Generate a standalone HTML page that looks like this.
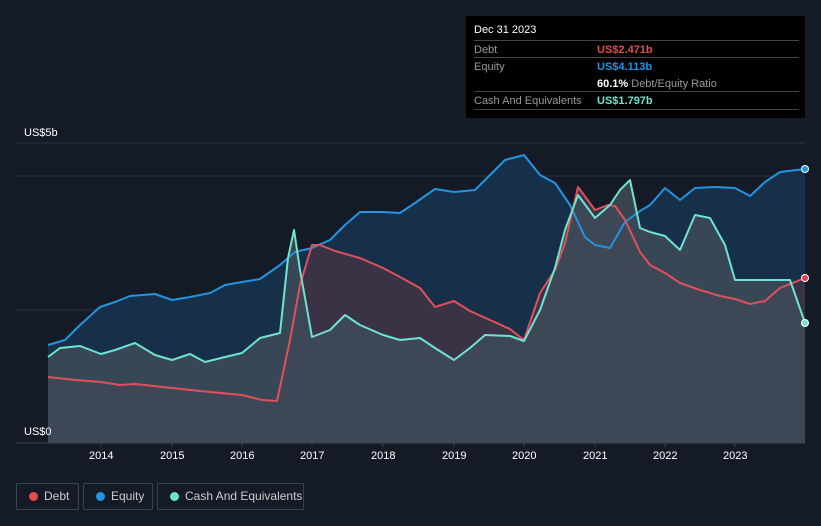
<!DOCTYPE html>
<html><head><meta charset="utf-8"><style>
body{margin:0;background:#151b26;width:821px;height:526px;overflow:hidden;font-family:"Liberation Sans",sans-serif;position:relative}
.tt{position:absolute;left:466px;top:16px;width:339px;height:102px;background:#000}
.tt .h{position:absolute;left:8px;top:8px;color:#fff;font-size:11px}
.row{position:absolute;left:8px;width:325px;border-top:1px solid #444;height:16px;font-size:11px;color:#999;line-height:16px;padding-top:1px}
.row span{position:absolute;left:123px;top:1px;font-weight:bold}
.leg{position:absolute;top:483px;height:27px;border:1px solid #3a4150;border-radius:2px;color:#ccc;font-size:12px;line-height:25px;box-sizing:border-box}
.leg i{position:absolute;left:12px;top:8px;width:9px;height:9px;border-radius:50%}
.leg b{font-weight:normal;position:absolute;left:27px}
.yr{position:absolute;top:450px;color:#fff;font-size:11px}
</style></head><body>
<svg width="821" height="526" style="position:absolute;left:0;top:0">
<line x1="16" y1="143" x2="805" y2="143" stroke="#2a3140"/>
<line x1="16" y1="176" x2="805" y2="176" stroke="#2a3140"/>
<line x1="16" y1="310" x2="805" y2="310" stroke="#2a3140"/>
<line x1="16" y1="443" x2="805" y2="443" stroke="#3a4150"/>
<g stroke-linejoin="round" stroke-width="2">
<polygon fill="#16304a" points="48,345 65,340 80,325 100,307 115,302 130,296 155,294 172,300 190,297 210,293 225,285 242,282 260,279 280,265 295,252 312,248 330,240 345,225 360,212 383,212 400,213 415,203 435,189 454,192 475,190 490,175 505,160 524,155 540,175 555,183 570,205 585,237 595,245 610,248 625,222 640,211 650,205 665,188 680,200 695,188 715,187 735,188 750,196 765,182 780,172 805,169 805,443 48,443"/>
<polygon fill="#3a3346" points="48,377 75,380 101,382 120,385 135,384 172,388 200,391 242,395 262,400 277,401 290,340 300,285 312,245 320,245 335,251 360,258 383,268 400,277 420,288 435,307 454,301 470,311 490,320 510,329 524,340 540,293 555,270 565,243 578,187 595,210 608,205 615,206 625,220 640,252 650,265 665,273 680,283 700,290 720,296 735,299 750,304 765,301 780,288 805,278 805,443 48,443"/>
<polygon fill="#3e4b58" opacity="0.85" points="48,357 60,348 80,346 101,354 115,350 135,343 155,355 172,360 190,354 205,362 225,357 242,353 260,338 280,333 288,258 294,230 300,270 312,337 330,330 345,315 360,325 383,335 400,340 420,338 435,348 454,360 470,348 485,335 510,336 524,341 540,310 555,268 565,230 578,195 595,218 610,205 620,190 630,180 640,228 650,232 665,236 680,250 695,215 710,218 725,245 735,280 765,280 790,280 805,323 805,443 48,443"/>
<polyline fill="none" stroke="#2394df" points="48,345 65,340 80,325 100,307 115,302 130,296 155,294 172,300 190,297 210,293 225,285 242,282 260,279 280,265 295,252 312,248 330,240 345,225 360,212 383,212 400,213 415,203 435,189 454,192 475,190 490,175 505,160 524,155 540,175 555,183 570,205 585,237 595,245 610,248 625,222 640,211 650,205 665,188 680,200 695,188 715,187 735,188 750,196 765,182 780,172 805,169"/>
<polyline fill="none" stroke="#e0505a" points="48,377 75,380 101,382 120,385 135,384 172,388 200,391 242,395 262,400 277,401 290,340 300,285 312,245 320,245 335,251 360,258 383,268 400,277 420,288 435,307 454,301 470,311 490,320 510,329 524,340 540,293 555,270 565,243 578,187 595,210 608,205 615,206 625,220 640,252 650,265 665,273 680,283 700,290 720,296 735,299 750,304 765,301 780,288 805,278"/>
<polyline fill="none" stroke="#6ee3cf" points="48,357 60,348 80,346 101,354 115,350 135,343 155,355 172,360 190,354 205,362 225,357 242,353 260,338 280,333 288,258 294,230 300,270 312,337 330,330 345,315 360,325 383,335 400,340 420,338 435,348 454,360 470,348 485,335 510,336 524,341 540,310 555,268 565,230 578,195 595,218 610,205 620,190 630,180 640,228 650,232 665,236 680,250 695,215 710,218 725,245 735,280 765,280 790,280 805,323"/>
</g>
<circle cx="805" cy="169" r="3.5" fill="#2394df" stroke="#fff" stroke-width="1"/>
<circle cx="805" cy="278" r="3.5" fill="#e0404a" stroke="#fff" stroke-width="1"/>
<circle cx="805" cy="323" r="3.5" fill="#6ee3cf" stroke="#fff" stroke-width="1"/>
<g stroke="#3a4150"><line x1="101" y1="443" x2="101" y2="447"/><line x1="172" y1="443" x2="172" y2="447"/><line x1="242" y1="443" x2="242" y2="447"/><line x1="312" y1="443" x2="312" y2="447"/><line x1="383" y1="443" x2="383" y2="447"/><line x1="454" y1="443" x2="454" y2="447"/><line x1="524" y1="443" x2="524" y2="447"/><line x1="595" y1="443" x2="595" y2="447"/><line x1="665" y1="443" x2="665" y2="447"/><line x1="735" y1="443" x2="735" y2="447"/></g>
<text x="24" y="136" fill="#fff" font-size="11" font-family="Liberation Sans">US$5b</text>
<text x="24" y="435" fill="#fff" font-size="11" font-family="Liberation Sans">US$0</text>
</svg>
<div class="yr" style="left:89px">2014</div><div class="yr" style="left:160px">2015</div><div class="yr" style="left:230px">2016</div><div class="yr" style="left:300px">2017</div><div class="yr" style="left:371px">2018</div><div class="yr" style="left:442px">2019</div><div class="yr" style="left:512px">2020</div><div class="yr" style="left:583px">2021</div><div class="yr" style="left:653px">2022</div><div class="yr" style="left:723px">2023</div>
<div class="tt"><div class="h">Dec 31 2023</div>
<div class="row" style="top:24px">Debt<span style="color:#e84a52">US$2.471b</span></div>
<div class="row" style="top:41px">Equity<span style="color:#2394df">US$4.113b</span></div>
<div class="row" style="top:58px;border-color:transparent"><span style="color:#fff">60.1% <em style="font-style:normal;font-weight:normal;color:#999">Debt/Equity Ratio</em></span></div>
<div class="row" style="top:75px">Cash And Equivalents<span style="color:#6ee3cf">US$1.797b</span></div>
<div class="row" style="top:93px"></div>
</div>
<div class="leg" style="left:16px;width:63px"><i style="background:#e84a52"></i><b>Debt</b></div>
<div class="leg" style="left:83px;width:70px"><i style="background:#2394df"></i><b>Equity</b></div>
<div class="leg" style="left:157px;width:147px"><i style="background:#6ee3cf"></i><b>Cash And Equivalents</b></div>
</body></html>
